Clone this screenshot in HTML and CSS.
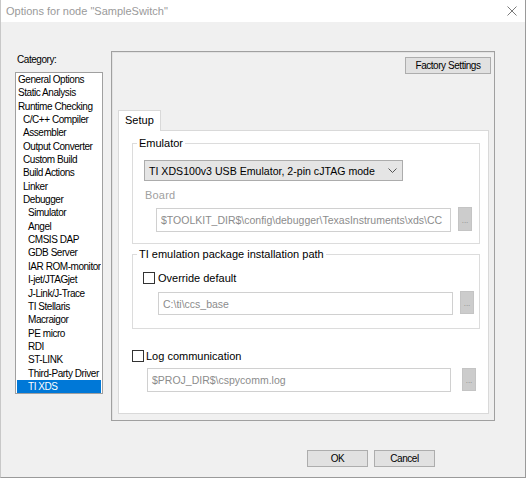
FILE: index.html
```html
<!DOCTYPE html>
<html>
<head>
<meta charset="utf-8">
<link rel="stylesheet" href="styles.css">
</head>
<body>
<div class="window">
  <div class="titlebar">
    <span class="title">Options for node "SampleSwitch"</span>
    <svg class="close" width="10" height="10" viewBox="0 0 10 10"><path d="M0.5 0.5L9.5 9.5M9.5 0.5L0.5 9.5" stroke="#7a7a7a" stroke-width="1" fill="none"/></svg>
  </div>
  <div class="main">
    <div class="category">
      <div class="cat-label">Category:</div>
      <div class="listbox">
        <div class="item l0">General Options</div>
        <div class="item l0">Static Analysis</div>
        <div class="item l0">Runtime Checking</div>
        <div class="item l1">C/C++ Compiler</div>
        <div class="item l1">Assembler</div>
        <div class="item l1">Output Converter</div>
        <div class="item l1">Custom Build</div>
        <div class="item l1">Build Actions</div>
        <div class="item l1">Linker</div>
        <div class="item l1">Debugger</div>
        <div class="item l2">Simulator</div>
        <div class="item l2">Angel</div>
        <div class="item l2">CMSIS DAP</div>
        <div class="item l2">GDB Server</div>
        <div class="item l2">IAR ROM-monitor</div>
        <div class="item l2">I-jet/JTAGjet</div>
        <div class="item l2">J-Link/J-Trace</div>
        <div class="item l2">TI Stellaris</div>
        <div class="item l2">Macraigor</div>
        <div class="item l2">PE micro</div>
        <div class="item l2">RDI</div>
        <div class="item l2">ST-LINK</div>
        <div class="item l2">Third-Party Driver</div>
        <div class="item l2 selected">TI XDS</div>
      </div>
    </div>
    <div class="panel">
      <div class="btn factory">Factory Settings</div>
      <div class="tabs">
        <div class="tabbar"><div class="tab">Setup</div></div>
        <div class="tabpage">
          <fieldset class="group g1">
            <legend>Emulator</legend>
            <div class="combo">
              <span>TI XDS100v3 USB Emulator, 2-pin cJTAG mode</span>
              <svg width="9" height="5" viewBox="0 0 9 5"><path d="M0.5 0.5L4.5 4.5L8.5 0.5" stroke="#555" stroke-width="1" fill="none"/></svg>
            </div>
            <div class="board-label">Board</div>
            <div class="path-row board-row">
              <div class="field board-field"><span>$TOOLKIT_DIR$\config\debugger\TexasInstruments\xds\CC</span></div>
              <div class="dots">...</div>
            </div>
          </fieldset>
          <fieldset class="group g2">
            <legend>TI emulation package installation path</legend>
            <div class="check-row override">
              <span class="box"></span><span class="check-label">Override default</span>
            </div>
            <div class="path-row ti-row">
              <div class="field ti-field"><span>C:\ti\ccs_base</span></div>
              <div class="dots">...</div>
            </div>
          </fieldset>
          <div class="check-row log">
            <span class="box"></span><span class="check-label">Log communication</span>
          </div>
          <div class="path-row log-row">
            <div class="field log-field"><span>$PROJ_DIR$\cspycomm.log</span></div>
            <div class="dots">...</div>
          </div>
        </div>
      </div>
    </div>
  </div>
  <div class="footer">
    <div class="btn ok">OK</div>
    <div class="btn cancel">Cancel</div>
  </div>
</div>
</body>
</html>
```

FILE: styles.css
```css
* { box-sizing: border-box; }
html, body { margin: 0; padding: 0; background: #ffffff; }
body { font-family: "Liberation Sans", Arial, sans-serif; font-size: 11px; color: #000; }

.window {
  width: 526px;
  height: 478px;
  background: #f0f0f0;
  border-left: 1px solid #c8c8c8;
  border-right: 1px solid #9a9a9a;
  border-bottom: 1px solid #9a9a9a;
  display: flex;
  flex-direction: column;
}

.titlebar {
  height: 22px;
  background: #ffffff;
  display: flex;
  align-items: center;
  justify-content: space-between;
  padding: 0 8px 0 5px;
  flex: none;
}
.title { color: #9a9a9a; font-size: 11px; }
.close { margin-bottom: 1px; }

.main {
  display: flex;
  padding-top: 29px;
  padding-left: 14px;
}

.category {
  width: 88px;
  font-size: 10px;
  letter-spacing: -0.45px;
}
.cat-label { margin-top: 2px; height: 13px; line-height: 13px; padding-left: 2px; }
.listbox {
  margin-top: 6px;
  width: 88px;
  height: 322px;
  background: #fff;
  border: 1px solid #a0a0a0;
}
.item {
  height: 13.35px;
  line-height: 13.35px;
  margin: 0 1px;
  white-space: nowrap;
  overflow: hidden;
  color: #000;
}
.l0 { padding-left: 1px; }
.l1 { padding-left: 6px; }
.l2 { padding-left: 11px; }
.selected { background: #0078d7; color: #fff; }

.panel {
  margin-left: 8px;
  width: 384px;
  height: 370px;
  border: 1px solid #a0a0a0;
  box-shadow: inset 1px 1px 0 #e3e3e3;
  display: flex;
  flex-direction: column;
}

.btn {
  background: #e1e1e1;
  border: 1px solid #adadad;
  font-size: 10px;
  letter-spacing: -0.45px;
  display: flex;
  align-items: center;
  justify-content: center;
  color: #000;
}
.factory {
  align-self: flex-end;
  margin: 5px 3px 0 0;
  width: 86px;
  height: 17px;
}

.tabs {
  margin: 36px 0 0 6px;
  width: 371px;
  display: flex;
  flex-direction: column;
}
.tabbar { display: flex; height: 20px; }
.tab {
  width: 43px;
  height: 21px;
  background: #fff;
  border: 1px solid #d9d9d9;
  border-bottom: none;
  padding-left: 6px;
  line-height: 19px;
  position: relative;
  z-index: 1;
}
.tabpage {
  height: 284px;
  background: #fff;
  border: 1px solid #d9d9d9;
  padding: 4px 8px 0 13px;
}

.group {
  margin: 0;
  padding: 0;
  border: 1px solid #dcdcdc;
  min-width: 0;
}
.group legend {
  margin-left: 4px;
  padding: 0 2px;
  line-height: 16px;
  height: 16px;
  color: #000;
}
.g1 { padding-bottom: 11px; }
.g2 { margin-top: 2px; padding-bottom: 13px; }

.combo {
  margin: 9px 0 0 11px;
  width: 259px;
  height: 21px;
  background: #e5e5e5;
  border: 1px solid #acacac;
  display: flex;
  align-items: center;
  justify-content: space-between;
  padding: 0 5px 0 4px;
  white-space: nowrap;
  overflow: hidden;
}
.combo span { font-size: 10.6px; }

.board-label {
  margin: 6px 0 0 12px;
  line-height: 16px;
  height: 16px;
  color: #a0a0a0;
  letter-spacing: 0.2px;
}

.path-row { display: flex; align-items: flex-start; }
.field {
  background: #fff;
  border: 1px solid #d0d0d0;
  color: #8c8c8c;
  white-space: nowrap;
  overflow: hidden;
  padding-left: 4px;
  display: flex;
  align-items: center;
  font-size: 10.5px;
}
.dots {
  width: 14px;
  background: #cccccc;
  border: 1px solid #c4c4c4;
  color: #8a8a8a;
  font-size: 8px;
  display: flex;
  align-items: center;
  justify-content: center;
  padding-top: 2px;
  flex: none;
}

.board-row { margin-top: 4px; padding-left: 23px; }
.board-field { margin-top: 1px; width: 295px; height: 24px; }
.board-row .dots { margin-left: 7px; height: 24px; }

.check-row { display: flex; align-items: center; height: 16px; }
.box {
  width: 12px;
  height: 12px;
  border: 1px solid #333;
  background: #fff;
  flex: none;
}
.override { margin: 8px 0 0 10px; }
.override .check-label { margin-left: 3px; }

.ti-row { margin-top: 5px; padding-left: 25px; }
.ti-field { margin-top: 1px; width: 295px; height: 23px; }
.ti-row .dots { margin-left: 7px; height: 23px; }

.log { margin-top: 19px; }
.log .check-label { margin-left: 2px; }
.log-row { margin-top: 4px; padding-left: 15px; }
.log-field { width: 304px; height: 24px; }
.log-row .dots { margin-left: 11px; height: 23px; }

.footer {
  display: flex;
  margin-top: 29px;
  padding-left: 306px;
  gap: 6px;
}
.ok, .cancel { width: 61px; height: 17px; }
```
